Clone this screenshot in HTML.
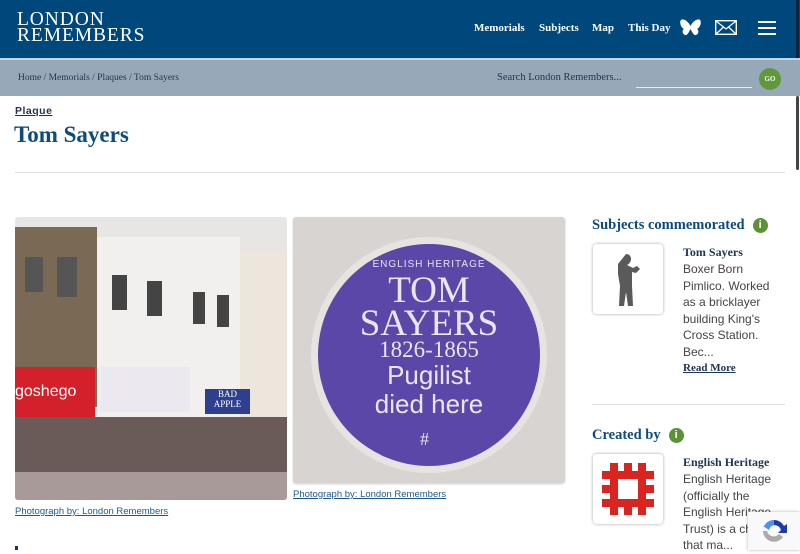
<!DOCTYPE html>
<html><head><meta charset="utf-8"><style>
*{margin:0;padding:0;box-sizing:border-box}
body{width:800px;height:550px;overflow:hidden;background:#fff;font-family:"Liberation Serif",serif;position:relative}
.hdr{position:absolute;left:0;top:0;width:800px;height:58px;background:#00477c}
.logo{position:absolute;left:17px;top:12px;color:#fff;font-size:19.5px;line-height:16px;letter-spacing:0.9px}
.nav{position:absolute;top:22px;color:#fff;font-size:11px;font-weight:bold}
.bc{position:absolute;left:0;top:58px;width:800px;height:38px;background:#97a9b8;border-top:2px solid #c9d4dc}
.bc .t{position:absolute;left:18px;top:13px;font-size:9.5px;color:#1d3550}
.srch{position:absolute;left:497px;top:12px;font-size:10.5px;color:#1d3550}
.line{position:absolute;left:636px;top:27px;width:116px;height:1px;background:#e8eef2}
.go{position:absolute;left:759px;top:8px;width:22px;height:22px;border-radius:50%;background:#5f9a3a;color:#fff;font-size:7px;font-weight:bold;text-align:center;line-height:22px}
.sans{font-family:"Liberation Sans",sans-serif}
.cap{position:absolute;font-family:"Liberation Sans",sans-serif;font-size:9.5px;color:#1d5a8a;text-decoration:underline}
.h3{position:absolute;font-size:14.5px;font-weight:bold;color:#0d4b7c}
.info{display:inline-block;width:15px;height:15px;border-radius:50%;background:#5a9235;color:#fff;font-size:11px;font-weight:bold;text-align:center;line-height:15px;vertical-align:1px;margin-left:8px;font-family:"Liberation Sans",sans-serif}
.thumb{position:absolute;width:70px;height:70px;background:#fff;border-radius:4px;box-shadow:0 0 3px rgba(0,0,0,.35)}
.st{position:absolute;font-size:12px;font-weight:bold;color:#1d3550}
.desc{position:absolute;font-family:"Liberation Sans",sans-serif;font-size:12px;line-height:16.5px;color:#444}
</style></head><body>
<div class="hdr">
<div class="logo">LONDON<br>REMEMBERS</div>
<div class="nav" style="left:474px">Memorials</div>
<div class="nav" style="left:539px">Subjects</div>
<div class="nav" style="left:592px">Map</div>
<div class="nav" style="left:628px">This Day</div>
<svg style="position:absolute;left:680px;top:19px" width="21" height="18" viewBox="0 0 21 18"><path d="M10.5 7C8 2 3 -1 1 1C-1 3 1 9 4 10C2 11 2 15 5 16C7 17 9 13 10.5 10C12 13 14 17 16 16C19 15 19 11 17 10C20 9 22 3 20 1C18 -1 13 2 10.5 7Z" fill="#fff"/></svg>
<svg style="position:absolute;left:715px;top:20px" width="22" height="15" viewBox="0 0 22 15"><rect x="0.7" y="0.7" width="20.6" height="13.6" fill="none" stroke="#fff" stroke-width="1.4"/><path d="M1 1L11 9L21 1M1 14L8.5 7M21 14L13.5 7" fill="none" stroke="#fff" stroke-width="1.2"/></svg>
<svg style="position:absolute;left:758px;top:21px" width="18" height="14"><rect y="0" width="18" height="2" fill="#fff"/><rect y="6" width="18" height="2" fill="#fff"/><rect y="12" width="18" height="2" fill="#fff"/></svg>
<div style="position:absolute;left:796px;top:0;width:3px;height:58px;background:#0a2440"></div>
</div>
<div class="bc"><div class="t">Home / Memorials / Plaques / Tom Sayers</div>
<div class="srch">Search London Remembers...</div><div class="line"></div><div class="go">GO</div></div>
<div style="position:absolute;left:796px;top:96px;width:3px;height:74px;background:#444;border-radius:2px"></div>
<div class="sans" style="position:absolute;left:15px;top:105px;font-size:10.5px;font-weight:bold;color:#1d3550;text-decoration:underline;letter-spacing:.5px">Plaque</div>
<div style="position:absolute;left:14px;top:122px;font-size:23px;font-weight:bold;color:#0d4b7c">Tom Sayers</div>
<div style="position:absolute;left:15px;top:172px;width:770px;height:1px;background:#ddd"></div>

<div style="position:absolute;left:15px;top:217px;width:272px;height:283px;overflow:hidden;background:#e8e6e4;border-radius:3px">
<div style="position:absolute;left:0;top:10px;width:82px;height:180px;background:#7a6a55"></div>
<div style="position:absolute;left:82px;top:20px;width:143px;height:180px;background:#f2f0ee"></div>
<div style="position:absolute;left:225px;top:35px;width:47px;height:170px;background:#ece6dc"></div>
<div style="position:absolute;left:10px;top:40px;width:18px;height:35px;background:#555"></div>
<div style="position:absolute;left:42px;top:40px;width:20px;height:40px;background:#555"></div>
<div style="position:absolute;left:97px;top:58px;width:15px;height:35px;background:#444"></div>
<div style="position:absolute;left:132px;top:64px;width:15px;height:35px;background:#444"></div>
<div style="position:absolute;left:178px;top:75px;width:12px;height:32px;background:#444"></div>
<div style="position:absolute;left:202px;top:78px;width:12px;height:32px;background:#444"></div>
<div style="position:absolute;left:0;top:150px;width:80px;height:50px;background:#d4202a;color:#fff;font-family:'Liberation Sans',sans-serif;font-size:16px;line-height:50px">goshego</div>
<div style="position:absolute;left:85px;top:150px;width:90px;height:45px;background:#ece8f0"></div>
<div style="position:absolute;left:190px;top:172px;width:45px;height:25px;background:#2f3f8f;color:#fff;font-size:9px;text-align:center">BAD APPLE</div>
<div style="position:absolute;left:0;top:200px;width:272px;height:55px;background:#6a5a58"></div>
<div style="position:absolute;left:0;top:255px;width:272px;height:28px;background:#a89a98"></div>
</div>
<div class="cap" style="left:15px;top:506px">Photograph by: London Remembers</div>

<div style="position:absolute;left:293px;top:217px;width:272px;height:266px;background:#d8d4d2;border-radius:3px;overflow:hidden;box-shadow:0 1px 2px rgba(0,0,0,.2)">
<div style="position:absolute;left:18px;top:20px;width:236px;height:236px;border-radius:50%;background:#e6e3e1"></div>
<div style="position:absolute;left:25px;top:27px;width:222px;height:222px;border-radius:50%;background:#5a47a8"></div>
<div style="position:absolute;left:0;top:42px;width:272px;text-align:center;color:#e6e2ee;font-family:'Liberation Sans',sans-serif;font-size:10px;letter-spacing:1px">ENGLISH HERITAGE</div>
<div style="position:absolute;left:0;top:57px;width:272px;text-align:center;color:#eae6f0;font-size:37px;line-height:33px">TOM<br>SAYERS</div>
<div style="position:absolute;left:0;top:120px;width:272px;text-align:center;color:#eae6f0;font-size:23px">1826-1865</div>
<div style="position:absolute;left:0;top:144px;width:272px;text-align:center;color:#eae6f0;font-family:'Liberation Sans',sans-serif;font-size:26px;line-height:29px">Pugilist<br>died here</div>
<div style="position:absolute;left:127px;top:212px;color:#eae6f0;font-size:18px">#</div>
</div>
<div class="cap" style="left:293px;top:489px">Photograph by: London Remembers</div>
<div style="position:absolute;left:15px;top:546px;width:3px;height:4px;background:#1d3550"></div>

<div class="h3" style="left:592px;top:217px">Subjects commemorated<span class="info">i</span></div>
<div class="thumb" style="left:593px;top:244px"><svg width="70" height="70" viewBox="0 0 70 70"><path d="M33 10c3 0 5 2 5 5s-2 5-4 6l6 3 4 -2 3 3-4 4-4-1 0 14 1 20-5 0-2-14-2 14-5 0 1-20-2-12 0-10z" fill="#5a5a5a"/></svg></div>
<div class="st" style="left:683px;top:245px">Tom Sayers</div>
<div class="desc" style="left:683px;top:261px;width:100px">Boxer Born Pimlico. Worked as a bricklayer building King's Cross Station. Bec...</div>
<div class="st" style="left:683px;top:362px;font-size:11px;text-decoration:underline">Read More</div>
<div style="position:absolute;left:592px;top:404px;width:193px;height:1px;background:#ddd"></div>
<div class="h3" style="left:592px;top:427px">Created by<span class="info">i</span></div>
<div class="thumb" style="left:593px;top:454px"><svg width="70" height="70" viewBox="0 0 70 70"><g fill="#d9241f"><path d="M17 17h36v36h-36zM25 25v20h20v-20z" fill-rule="evenodd"/><rect x="17" y="9" width="8" height="8"/><rect x="31" y="9" width="8" height="8"/><rect x="45" y="9" width="8" height="8"/><rect x="17" y="53" width="8" height="8"/><rect x="31" y="53" width="8" height="8"/><rect x="45" y="53" width="8" height="8"/><rect x="9" y="17" width="8" height="8"/><rect x="9" y="31" width="8" height="8"/><rect x="9" y="45" width="8" height="8"/><rect x="53" y="17" width="8" height="8"/><rect x="53" y="31" width="8" height="8"/><rect x="53" y="45" width="8" height="8"/></g></svg></div>
<div class="st" style="left:683px;top:455px">English Heritage</div>
<div class="desc" style="left:683px;top:471px;width:100px">English Heritage (officially the English Heritage Trust) is a charity that ma...</div>
<div style="position:absolute;left:748px;top:512px;width:52px;height:38px;background:#f9f9f9;box-shadow:0 0 3px rgba(0,0,0,.3)">
<svg style="position:absolute;left:12px;top:5px" width="28" height="28" viewBox="0 0 28 28"><path d="M14 3a11 11 0 0 1 10 6l3-2v9h-9l3-3a7 7 0 0 0-7-5z" fill="#1c3aa9"/><path d="M14 3a11 11 0 0 0-10 6l-1 0 6 4a7 7 0 0 1 5-5z" fill="#4a90f5"/><path d="M3 14a11 11 0 0 0 20 6l-4-3a7 7 0 0 1-12-3z" fill="#aaa"/></svg></div>
</body></html>
